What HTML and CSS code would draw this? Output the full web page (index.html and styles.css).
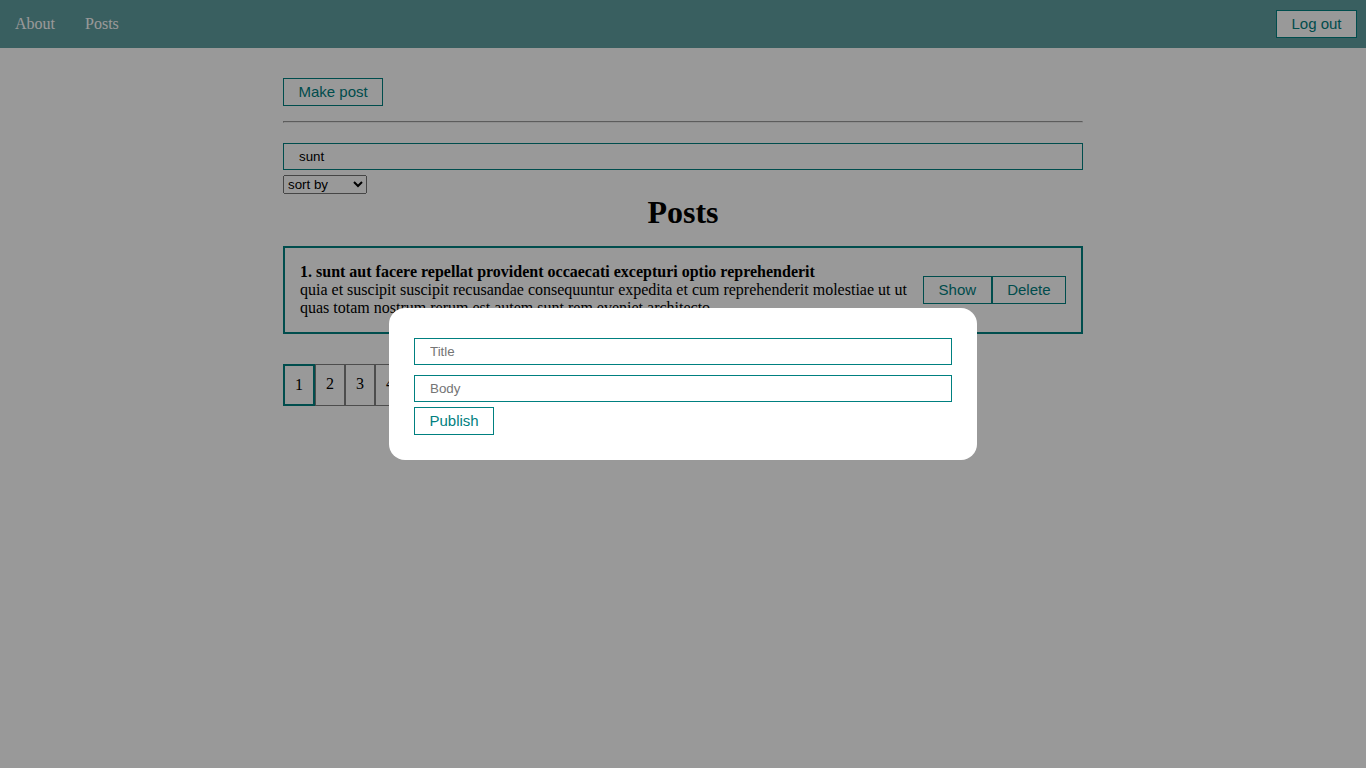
FILE: index.html
```html
<!DOCTYPE html>
<html>
<head>
<meta charset="utf-8">
<link rel="stylesheet" href="styles.css">
</head>
<body>
<div class="navbar">
  <div class="navbar-links">
    <a class="nav-link" href="#">About</a>
    <a class="nav-link" href="#">Posts</a>
  </div>
  <button class="btn btn-white">Log out</button>
</div>
<div class="app">
  <button class="btn">Make post</button>
  <hr class="divider">
  <div class="filter">
    <input class="input" value="sunt">
    <select class="sort-select">
      <option>sort by</option>
      <option>By title</option>
      <option>By body</option>
    </select>
  </div>
  <h1 class="list-title">Posts</h1>
  <div class="post">
    <div class="post-content">
      <strong>1. sunt aut facere repellat provident occaecati excepturi optio reprehenderit</strong>
      <div>quia et suscipit suscipit recusandae consequuntur expedita et cum reprehenderit molestiae ut ut quas totam nostrum rerum est autem sunt rem eveniet architecto</div>
    </div>
    <div class="post-btns">
      <button class="btn">Show</button><button class="btn">Delete</button>
    </div>
  </div>
  <div class="pages">
    <span class="page page-current">1</span>
    <span class="page">2</span>
    <span class="page">3</span>
    <span class="page">4</span>
    <span class="page">5</span>
    <span class="page">6</span>
    <span class="page">7</span>
    <span class="page">8</span>
    <span class="page">9</span>
    <span class="page">10</span>
  </div>
</div>
<div class="modal">
  <div class="modal-content">
    <input class="input" placeholder="Title">
    <input class="input" placeholder="Body">
    <button class="btn">Publish</button>
  </div>
</div>
</body>
</html>
```
FILE: styles.css
```css
* { box-sizing: border-box; }
body {
  margin: 0;
  font-family: "Liberation Serif", "Times New Roman", serif;
  font-size: 16px;
  background: #fff;
}
.navbar {
  height: 48px;
  background: cadetblue;
  display: flex;
  align-items: center;
  justify-content: space-between;
  padding: 0 9px 0 15px;
}
.navbar-links {
  display: flex;
  gap: 30px;
}
.nav-link {
  color: #fff;
  text-decoration: none;
  font-size: 16px;
}
.btn {
  font-family: "Liberation Sans", Arial, sans-serif;
  font-size: 15px;
  line-height: 16px;
  padding: 5px 14.5px;
  color: teal;
  background: transparent;
  border: 1px solid teal;
  cursor: pointer;
  margin: 0;
}
.btn-white { background: #fff; }
.app {
  width: 800px;
  margin: 30px auto;
}
.divider {
  margin: 15px 0;
}
.filter {
  display: flex;
  flex-direction: column;
  align-items: flex-start;
}
.input {
  display: block;
  width: 100%;
  font-family: "Liberation Sans", Arial, sans-serif;
  font-size: 13.33px;
  line-height: 15px;
  padding: 5px 15px;
  margin: 5px 0;
  border: 1px solid teal;
  outline: none;
}
.sort-select {
  width: 84px;
  height: 19px;
  font-family: "Liberation Sans", Arial, sans-serif;
  font-size: 13.33px;
}
.list-title {
  text-align: center;
  margin: 0;
  font-size: 32px;
  line-height: 37px;
}
.post {
  display: flex;
  justify-content: space-between;
  align-items: center;
  padding: 15px;
  margin-top: 15px;
  border: 2px solid teal;
  line-height: 18px;
}
.post-btns {
  display: flex;
  flex-shrink: 0;
}
.pages {
  display: flex;
  margin-top: 30px;
}
.page {
  padding: 10px;
  border: 1px solid gray;
  line-height: 18px;
  cursor: pointer;
}
.page-current {
  border: 2px solid teal;
}
.modal {
  position: fixed;
  inset: 0;
  background: rgba(0, 0, 0, 0.4);
  display: flex;
  justify-content: center;
  align-items: center;
}
.modal-content {
  width: 588px;
  padding: 25px;
  background: #fff;
  border-radius: 16px;
  display: flex;
  flex-direction: column;
  align-items: flex-start;
}
```
